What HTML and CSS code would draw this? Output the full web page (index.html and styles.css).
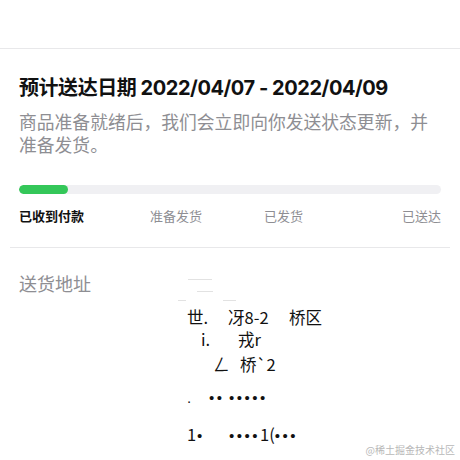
FILE: index.html
```html
<!DOCTYPE html>
<html lang="zh">
<head>
<meta charset="utf-8">
<link rel="stylesheet" href="styles.css">
</head>
<body>
<div class="top"></div>
<section class="status">
  <h1 class="title">预计送达日期 2022/04/07 - 2022/04/09</h1>
  <p class="desc">商品准备就绪后，我们会立即向你发送状态更新，并准备发货。</p>
  <div class="track"><div class="fill" style="width: 49px"></div></div>
  <div class="steps">
    <span class="step done">已收到付款</span>
    <span class="step">准备发货</span>
    <span class="step">已发货</span>
    <span class="step last">已送达</span>
  </div>
</section>
<div class="divider"></div>
<section class="address">
  <div class="label">送货地址</div>
  <div class="lines">
    <div class="faint f1"><span class="dash d1"></span></div>
    <div class="faint f2"><span class="dash d2"></span></div>
    <div class="faint f3"><span class="dash d0"></span><span class="dash d3"></span></div>
    <div class="line l1"><span class="w1">世.</span><span class="w2">冴8-2</span><span class="w3">桥区</span></div>
    <div class="line l2"><span class="w4">i.</span><span class="w5">戎r</span></div>
    <div class="line l3"><span class="w6">ㄥ</span><span class="w7">桥`2</span></div>
    <div class="line l4"><span class="dots w8">.</span><span class="dots w9">••</span><span class="dots">•••••</span></div>
    <div class="line l5"><span class="w11">1</span><span class="dots w12">•</span><span class="dots">••••</span><span>1(</span><span class="dots">•••</span></div>
  </div>
</section>
<div class="mark">@稀土掘金技术社区</div>
</body>
</html>
```
FILE: styles.css
```css
* { box-sizing: border-box; }
html, body { margin: 0; padding: 0; background: #fff; }
body {
  width: 460px;
  height: 460px;
  overflow: hidden;
  position: relative;
  font-family: "Inter", "Noto Sans CJK SC", sans-serif;
  color: #111;
}
.top {
  height: 49px;
  border-bottom: 1px solid #e8e8ea;
}
.status {
  padding: 25px 19px 0 19px;
}
.title {
  margin: 0;
  font-size: 20px;
  line-height: 28px;
  font-weight: 700;
  letter-spacing: -0.45px;
  color: #111;
}
.desc {
  margin: 8px 0 0 0;
  font-size: 17.8px;
  line-height: 23px;
  color: #8e8e93;
  font-family: "Noto Sans CJK SC", sans-serif;
}
.track {
  margin-top: 29px;
  height: 9px;
  border-radius: 5px;
  background: #f0f0f3;
  overflow: hidden;
}
.fill {
  height: 100%;
  border-radius: 5px;
  background: #34c759;
}
.steps {
  margin-top: 13px;
  display: grid;
  grid-template-columns: 131px 114px 138px 1fr;
  font-size: 13px;
  line-height: 18px;
  font-family: "Noto Sans CJK SC", sans-serif;
  color: #8e8e93;
}
.step.done { color: #111; font-weight: 700; }
.step.last { text-align: right; }
.divider {
  margin: 22px 10px 0 10px;
  border-top: 1px solid #e8e8ea;
}
.address {
  padding: 23px 19px 0 19px;
  display: grid;
  grid-template-columns: 168px 1fr;
  font-family: "Noto Sans CJK SC", sans-serif;
}
.label {
  font-size: 18px;
  line-height: 24px;
  color: #8e8e93;
}
.lines {
  font-size: 16.5px;
  color: #111;
  padding-top: 8px;
}
.faint { height: 1px; display: flex; }
.f2 { margin-top: 11px; }
.f3 { margin-top: 8px; }
.dash { display: block; height: 1px; background: #e2e2e2; }
.d1 { width: 24px; margin-left: 1px; }
.d2 { width: 16px; margin-left: 10px; }
.d0 { width: 8px; margin-left: -9px; }
.d3 { width: 13px; margin-left: 37px; }
.line { line-height: 22px; white-space: pre; }
.line span { display: inline-block; }
.l1 { margin-top: 5px; }
.l3 { margin-top: 3px; }
.l4 { margin-top: 10px; }
.l5 { margin-top: 14px; }
.w1 { width: 41px; }
.w2 { width: 61px; }
.w4 { margin-left: 14px; width: 37px; }
.w6 { margin-left: 26px; width: 27px; }
.dots {
  font-family: "Liberation Sans", sans-serif;
  font-size: 15px;
  letter-spacing: 2.5px;
}
.w8 { width: 22px; }
.w9 { width: 20px; }
.w11 { width: 10px; }
.w12 { width: 32px; }
.mark {
  position: absolute;
  right: 5px;
  bottom: 3px;
  font-size: 10px;
  line-height: 14px;
  color: #b8b8b8;
  font-family: "Noto Sans CJK SC", sans-serif;
}
```
